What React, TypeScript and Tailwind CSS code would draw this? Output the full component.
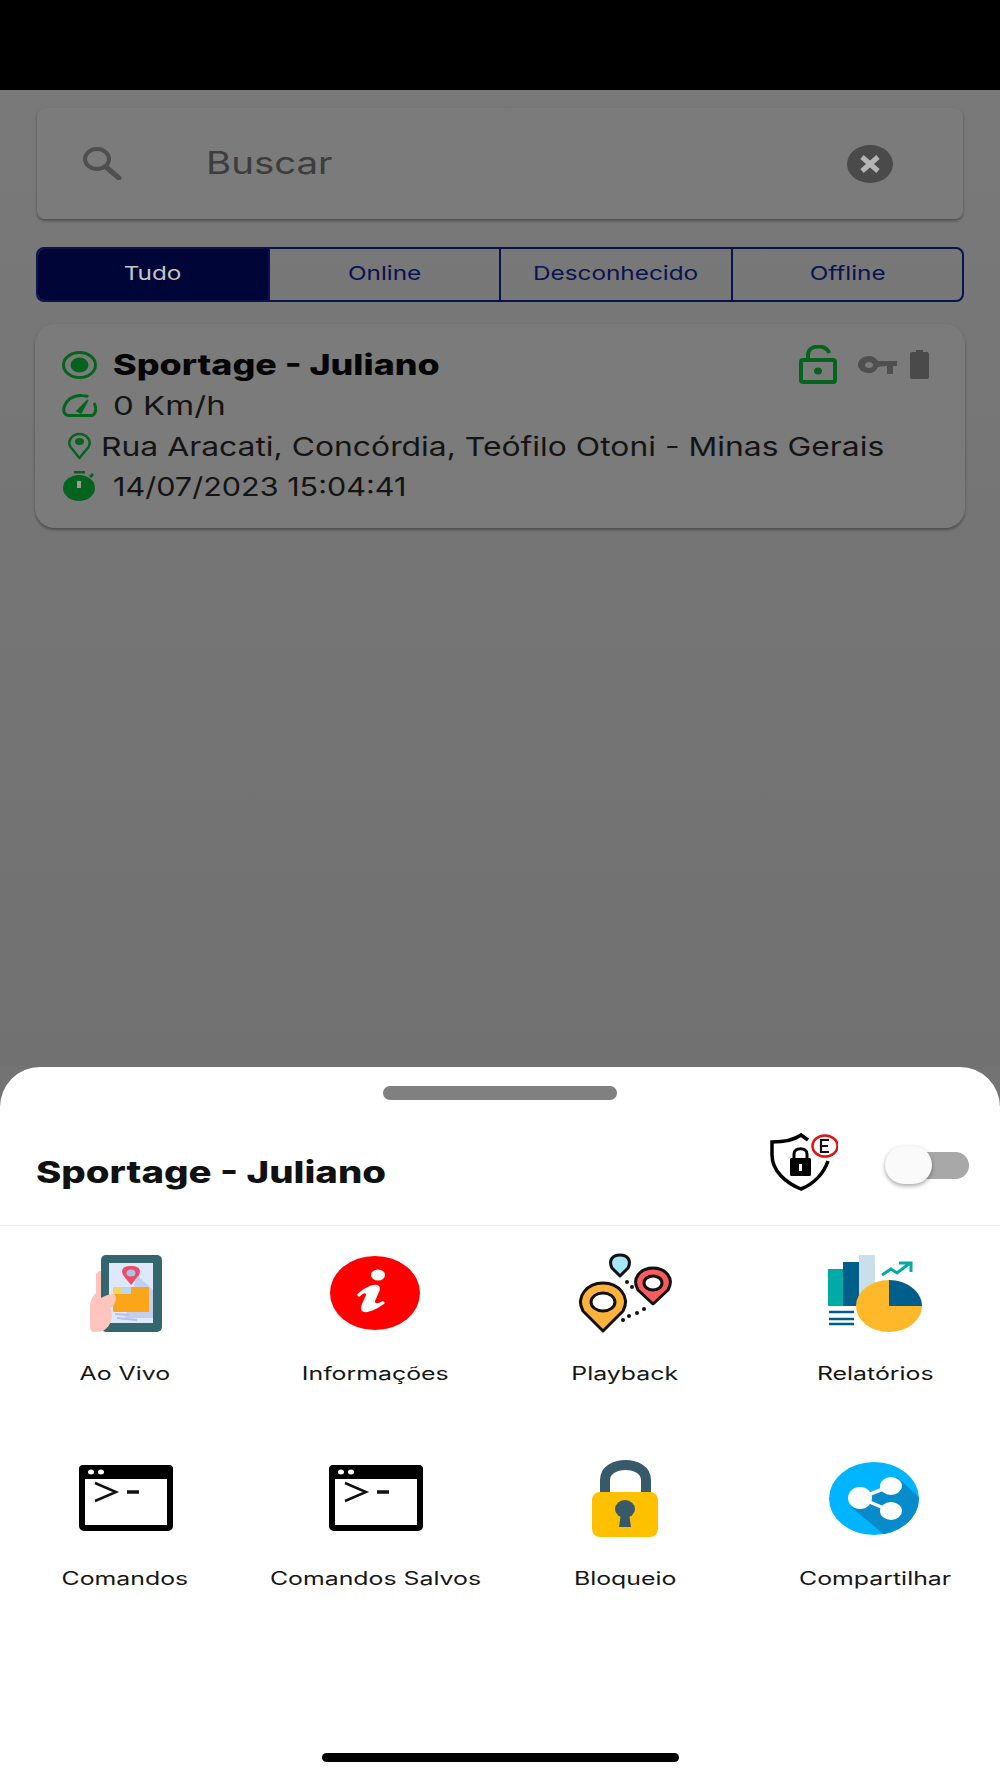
import React from "react";

const Wide = ({ children, className = "" }: { children: React.ReactNode; className?: string }) => (
	<span className={`inline-block whitespace-nowrap ${className}`}>{children}</span>
);

const SearchIcon = () => (
	<svg width="40" height="33" viewBox="0 0 40 33" fill="none" stroke="#4f4f4f">
		<ellipse cx="15" cy="12" rx="12" ry="10" strokeWidth="4" />
		<path d="M24 20 L37 31" strokeWidth="5" strokeLinecap="round" />
	</svg>
);

const ClearIcon = () => (
	<svg width="46" height="38" viewBox="0 0 46 38">
		<ellipse cx="23" cy="19" rx="23" ry="19" fill="#4a4a4a" />
		<path d="M15 12 L31 26 M31 12 L15 26" stroke="#b5b5b5" strokeWidth="5" />
	</svg>
);

const EyeIcon = () => (
	<svg width="35" height="28" viewBox="0 0 35 28" fill="none">
		<ellipse cx="17.5" cy="14" rx="16" ry="12.5" stroke="#04641e" strokeWidth="3" />
		<ellipse cx="17.5" cy="14" rx="9" ry="7.5" fill="#04641e" />
	</svg>
);

const SpeedIcon = () => (
	<svg width="35" height="23" viewBox="0 0 35 23" fill="none" stroke="#04641e">
		<path d="M6 21.5 C1 20 1 15 3 11 C6 4 14 1 20 1.5 C24 1.5 25 2 26 3" strokeWidth="3" />
		<path d="M32 9 C35 14 34 20 30 21.5 L6 21.5" strokeWidth="3" />
		<path d="M15 17 L26 6 L19 19 Z" fill="#04641e" strokeWidth="1.5" />
	</svg>
);

const PinIcon = () => (
	<svg width="25" height="28" viewBox="0 0 25 28" fill="none">
		<path d="M12.5 26 L3.5 15 C0 9 5 2 12.5 2 C20 2 25 9 21.5 15 Z" stroke="#04641e" strokeWidth="2.5" strokeLinejoin="round" />
		<ellipse cx="12.5" cy="9.5" rx="4.5" ry="3.5" fill="#04641e" />
	</svg>
);

const TimerIcon = () => (
	<svg width="33" height="30" viewBox="0 0 33 30">
		<rect x="11" y="0" width="11" height="2.5" fill="#04641e" />
		<ellipse cx="16" cy="17" rx="16" ry="13" fill="#04641e" />
		<path d="M27 6 L30 3" stroke="#04641e" strokeWidth="3" />
		<rect x="14" y="10" width="4" height="7" fill="#9a9a9a" />
	</svg>
);

const OpenLockIcon = () => (
	<svg width="38" height="39" viewBox="0 0 38 39" fill="none" stroke="#04641e">
		<path d="M9 15 L9 10 C9 -1 28 -1 30 8" strokeWidth="4" />
		<rect x="2" y="15" width="34" height="22" rx="2" strokeWidth="4" />
		<ellipse cx="19" cy="26" rx="4" ry="3.5" fill="#04641e" stroke="none" />
	</svg>
);

const KeyIcon = () => (
	<svg width="39" height="18" viewBox="0 0 39 18">
		<path
			fillRule="evenodd"
			d="M0 9 C0 3 6 0 11 0 C15 0 18 2 20 5 L39 5 L39 10 L35 10 L35 18 L29 18 L29 10 L27 10 L20 11 C18 15 15 17 11 17 C6 17 0 14 0 9 Z M7 9 C7 11 9 12 11 12 C13 12 15 11 15 9 C15 7 13 6 11 6 C9 6 7 7 7 9 Z"
			fill="#4f4f4f"
		/>
	</svg>
);

const BatteryIcon = () => (
	<svg width="19" height="29" viewBox="0 0 19 29">
		<rect x="6" y="0" width="7" height="3" fill="#4a4a4a" />
		<rect x="0" y="2" width="19" height="27" rx="2" fill="#4a4a4a" />
	</svg>
);

const ShieldIcon = () => (
	<svg width="70" height="60" viewBox="0 0 70 60" fill="none">
		<path
			d="M40 9 L33 4 C26 9 15 11 4 11 L4 24 C4 40 18 52 33 58 C46 53 56 42 60 30"
			stroke="#000"
			strokeWidth="3.5"
		/>
		<rect x="22" y="27" width="21" height="18" rx="1.5" fill="#000" />
		<path d="M26 27 L26 23 C26 16 39 16 39 23 L39 27" stroke="#000" strokeWidth="3" />
		<rect x="31" y="33" width="3" height="7" fill="#fff" />
		<ellipse cx="57" cy="15" rx="12.5" ry="10.5" fill="#fff" stroke="#e41212" strokeWidth="2.5" />
		<path d="M61 9 L53 9 L53 21 L61 21 M53 15 L60 15" stroke="#111" strokeWidth="2.2" />
	</svg>
);

const LiveIcon = () => (
	<svg width="100" height="90" viewBox="0 0 100 90">
		<rect x="26" y="7" width="61" height="77" rx="5" fill="#33666d" />
		<rect x="34" y="15" width="44" height="60" fill="#dfe7fb" />
		<path d="M62 27 L78 42 L78 70 L50 70 Z" fill="#c3cff1" />
		<path d="M56 37 L48 27 C45 20 50 18 56 18 C62 18 67 20 64 27 Z" fill="#ee4d61" />
		<ellipse cx="56" cy="25" rx="4.5" ry="3.5" fill="#a9c1ee" />
		<rect x="38" y="39" width="36" height="25" rx="1" fill="#fba51b" />
		<rect x="38" y="39" width="10" height="7" fill="#f8d35e" />
		<rect x="47" y="39" width="9" height="7" fill="#bcd4f2" />
		<path d="M42 70 L62 72 M40 66 L54 67" stroke="#b5c2e8" strokeWidth="2" />
		<path
			d="M26 23 L26 50 C30 48 36 45 39 46 C43 50 40 58 35 60 C39 66 37 78 28 83 L19 84 C15 84 15 80 15 75 L15 60 C15 52 18 48 21 45 L21 27 C21 24 24 23 26 23 Z"
			fill="#fdc5bd"
		/>
	</svg>
);

const InfoIcon = () => (
	<svg width="100" height="90" viewBox="0 0 100 90">
		<ellipse cx="50" cy="45" rx="45" ry="37" fill="#fe0000" />
		<ellipse cx="53" cy="27" rx="7" ry="5.5" fill="#fff" />
		<path
			d="M32 47 C37 41 47 36 52 37 C56 38 55 42 54 44 L50 53 C50 56 52 56 58 53 L60 55 C54 60 44 65 39 64 C35 63 36 59 37 56 L41 47 C41 44 38 45 34 49 Z"
			fill="#fff"
		/>
	</svg>
);

const PlaybackIcon = () => (
	<svg width="100" height="90" viewBox="0 0 100 90" stroke="#111" strokeWidth="3">
		<path d="M45 28 L37 20 C33 12 38 7 45 7 C52 7 57 12 53 20 Z" fill="#a6e6f7" strokeLinejoin="round" />
		<path d="M78 56 L63 42 C56 30 66 20 78 20 C90 20 100 30 93 42 Z" fill="#f95c5c" strokeLinejoin="round" />
		<ellipse cx="78" cy="35" rx="9" ry="7" fill="#fff" />
		<path d="M28 83 L8 63 C0 48 13 35 28 35 C43 35 56 48 48 63 Z" fill="#fdb33b" strokeLinejoin="round" />
		<ellipse cx="28" cy="54" rx="12" ry="9" fill="#fff" />
		<g fill="#111" stroke="none">
			<circle cx="52" cy="34" r="2" />
			<circle cx="57" cy="39" r="2" />
			<circle cx="69" cy="61" r="2" />
			<circle cx="62" cy="65" r="2" />
			<circle cx="54" cy="68" r="2" />
			<circle cx="48" cy="72" r="2" />
		</g>
	</svg>
);

const ReportIcon = () => (
	<svg width="100" height="90" viewBox="0 0 100 90">
		<rect x="3" y="21" width="15" height="37" fill="#00aaa6" />
		<rect x="18" y="14" width="16" height="44" fill="#005e8a" />
		<rect x="34" y="7" width="16" height="51" fill="#c9dfe9" />
		<path d="M4 64 H29 M4 71 H29 M4 76 H29" stroke="#005e8a" strokeWidth="2.5" />
		<path d="M64 32 A33 26 0 1 0 97 58 L64 58 Z" fill="#ffb82a" />
		<path d="M64 32 C82 32 97 44 97 58 L64 58 Z" fill="#005e8a" />
		<path d="M57 27 L66 21 L72 25 L85 15 M74 15 H86 V24" fill="none" stroke="#00aaa6" strokeWidth="3" />
	</svg>
);

const TerminalIcon = () => (
	<svg width="100" height="90" viewBox="0 0 100 90" fill="none">
		<rect x="7" y="15" width="88" height="60" rx="2" stroke="#000" strokeWidth="6" />
		<rect x="4" y="12" width="94" height="14" rx="4" fill="#000" />
		<ellipse cx="16" cy="19" rx="3" ry="2.5" fill="#fff" />
		<ellipse cx="26" cy="19" rx="3" ry="2.5" fill="#fff" />
		<path d="M20 30 L41 39 L20 48" stroke="#111" strokeWidth="2.5" />
		<path d="M52 39 H64" stroke="#111" strokeWidth="3.5" />
	</svg>
);

const LockIcon = () => (
	<svg width="100" height="90" viewBox="0 0 100 90" fill="none">
		<path d="M30 42 L30 27 C30 7 71 7 71 27 L71 42" stroke="#37596a" strokeWidth="10" />
		<rect x="17" y="39" width="66" height="45" rx="8" fill="#ffc000" />
		<ellipse cx="50" cy="56" rx="10" ry="9" fill="#37596a" />
		<path d="M46 60 L44 74 H56 L54 60 Z" fill="#37596a" />
	</svg>
);

const ShareIcon = () => (
	<svg width="100" height="90" viewBox="0 0 100 90">
		<clipPath id="share-disc">
			<ellipse cx="49" cy="45.5" rx="45" ry="36.5" />
		</clipPath>
		<ellipse cx="49" cy="45.5" rx="45" ry="36.5" fill="#00b4ff" />
		<path d="M72 24 L100 50 L100 90 L62 84 L26 54 L50 40 Z" fill="#078bcb" clipPath="url(#share-disc)" />
		<path d="M35 45 L66 33 M35 45 L66 58" stroke="#fff" strokeWidth="3.5" />
		<ellipse cx="35" cy="45" rx="12" ry="11" fill="#fff" />
		<ellipse cx="66" cy="33" rx="11" ry="9" fill="#fff" />
		<ellipse cx="66" cy="58" rx="11" ry="9" fill="#fff" />
	</svg>
);

const actions = [
	{ label: "Ao Vivo", icon: <LiveIcon /> },
	{ label: "Informações", icon: <InfoIcon /> },
	{ label: "Playback", icon: <PlaybackIcon /> },
	{ label: "Relatórios", icon: <ReportIcon /> },
	{ label: "Comandos", icon: <TerminalIcon /> },
	{ label: "Comandos Salvos", icon: <TerminalIcon /> },
	{ label: "Bloqueio", icon: <LockIcon /> },
	{ label: "Compartilhar", icon: <ShareIcon /> },
];

const tabs = ["Online", "Desconhecido", "Offline"];

const App = () => {
	return (
		<div className="flex h-[1778px] w-[1000px] flex-col overflow-hidden bg-[#737373] [font-family:Inter,sans-serif]">
			<div className="h-[90px] shrink-0 bg-black"></div>

			<main className="flex flex-1 flex-col bg-gradient-to-b from-[#797979] to-[#717171] px-[36px] pt-[18px]">
				<div className="mx-px flex h-[111px] items-center rounded-[8px] bg-[#7b7b7b] pl-[45px] pr-[70px] shadow-[0_2px_3px_rgba(0,0,0,0.35)]">
					<SearchIcon />
					<Wide className="ml-[84px] origin-left scale-x-[1.24] text-[31px] text-[#3d3d3d]">Buscar</Wide>
					<div className="ml-auto">
						<ClearIcon />
					</div>
				</div>

				<div className="mt-[28px] flex h-[55px] overflow-hidden rounded-[8px] border-2 border-[#0a1250] text-[19px] text-[#0a1250]">
					<div className="flex flex-1 items-center justify-center bg-[#000537] text-[#c4c4c4]">
						<Wide className="scale-x-[1.28]">Tudo</Wide>
					</div>
					{tabs.map((tab) => (
						<div key={tab} className="flex flex-1 items-center justify-center border-l-2 border-[#0a1250]">
							<Wide className="scale-x-[1.28]">{tab}</Wide>
						</div>
					))}
				</div>

				<div className="-mx-px mt-[22px] flex h-[204px] flex-col rounded-[20px] bg-[#7b7b7b] pl-[27px] pr-[36px] pt-[20px] text-[26px] text-[#141414] shadow-[0_2px_3px_rgba(0,0,0,0.35)]">
					<div className="flex h-[41px] items-center gap-[16px]">
						<EyeIcon />
						<Wide className="origin-left scale-x-[1.28] text-[28px] font-extrabold text-[#050505]">Sportage - Juliano</Wide>
						<div className="ml-auto flex items-center gap-[21px]">
							<OpenLockIcon />
							<div className="flex items-center gap-[13px]">
								<KeyIcon />
								<BatteryIcon />
							</div>
						</div>
					</div>
					<div className="flex h-[41px] items-center gap-[16px]">
						<SpeedIcon />
						<Wide className="origin-left scale-x-[1.27]">0 Km/h</Wide>
					</div>
					<div className="flex h-[40px] items-center gap-[9px] pl-[5px]">
						<PinIcon />
						<Wide className="origin-left scale-x-[1.225]">Rua Aracati, Concórdia, Teófilo Otoni - Minas Gerais</Wide>
					</div>
					<div className="flex h-[40px] items-center gap-[17px] pl-px">
						<TimerIcon />
						<Wide className="origin-left scale-x-[1.175]">14/07/2023 15:04:41</Wide>
					</div>
				</div>
			</main>

			<section className="relative flex h-[711px] shrink-0 flex-col rounded-t-[40px] bg-white">
				<div className="mx-auto mt-[19px] h-[14px] w-[234px] rounded-full bg-[#808080]"></div>

				<div className="relative flex h-[126px] items-center border-b border-[#ececec] pl-[36px]">
					<Wide className="mt-[20px] origin-left scale-x-[1.28] text-[30px] font-extrabold text-[#111]">Sportage - Juliano</Wide>
					<div className="absolute left-[768px] top-[31px]">
						<ShieldIcon />
					</div>
					<div className="absolute left-[889px] top-[52px] h-[27px] w-[80px] rounded-full bg-[#a8a8a8]"></div>
					<div className="absolute left-[885px] top-[46px] h-[38px] w-[47px] rounded-full bg-[#fafafa] shadow-[0_2px_4px_rgba(0,0,0,0.35)]"></div>
				</div>

				<div className="grid grid-cols-4 gap-y-[65px] pt-[22px]">
					{actions.map((action) => (
						<div key={action.label} className="flex flex-col items-center gap-[22px]">
							<div className="h-[90px]">{action.icon}</div>
							<Wide className="text-[18px] leading-[28px] text-[#161616] scale-x-[1.38]">{action.label}</Wide>
						</div>
					))}
				</div>

				<div className="mx-auto mt-auto mb-[16px] h-[9px] w-[357px] rounded-full bg-black"></div>
			</section>
		</div>
	);
};

export default App;
